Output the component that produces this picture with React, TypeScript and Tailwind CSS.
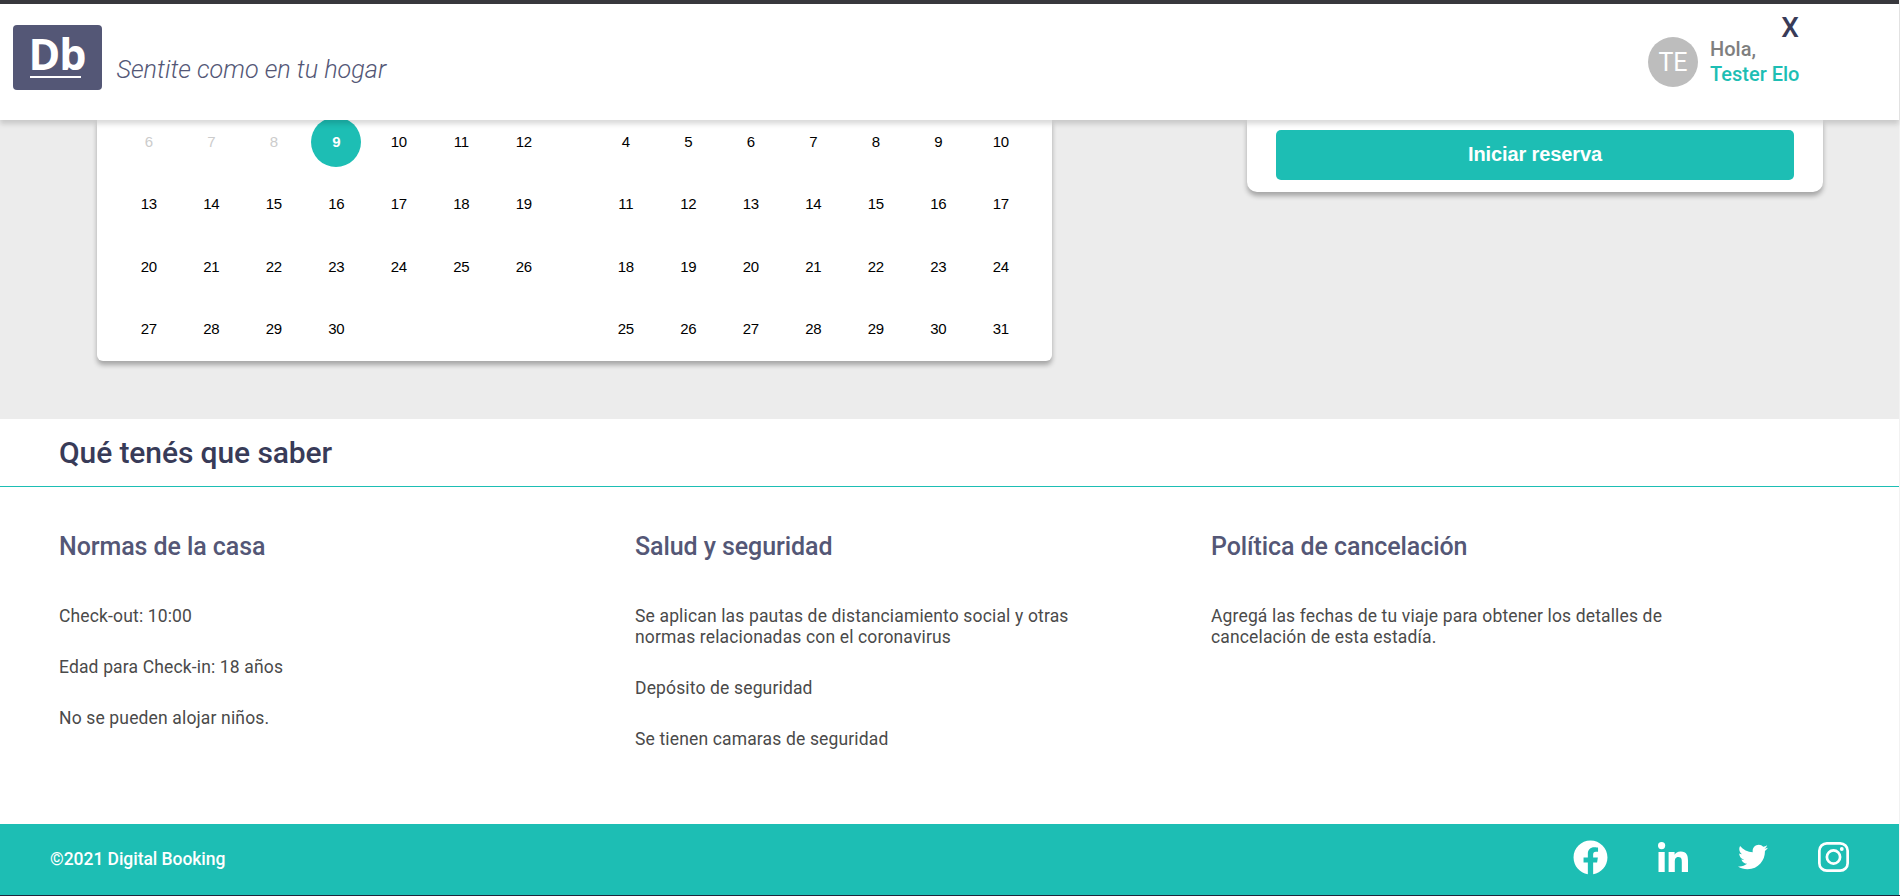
import { FaFacebook, FaTwitter } from "react-icons/fa";

const june: number[] = [
  6, 7, 8, 9, 10, 11, 12, 13, 14, 15, 16, 17, 18, 19, 20, 21, 22, 23, 24, 25, 26, 27, 28, 29, 30,
];
const july: number[] = [
  4, 5, 6, 7, 8, 9, 10, 11, 12, 13, 14, 15, 16, 17, 18, 19, 20, 21, 22, 23, 24, 25, 26, 27, 28, 29, 30, 31,
];

const policies = [
  { title: "Normas de la casa", items: ["Check-out: 10:00", "Edad para Check-in: 18 años", "No se pueden alojar niños."] },
  {
    title: "Salud y seguridad",
    items: [
      "Se aplican las pautas de distanciamiento social y otras normas relacionadas con el coronavirus",
      "Depósito de seguridad",
      "Se tienen camaras de seguridad",
    ],
  },
  {
    title: "Política de cancelación",
    items: ["Agregá las fechas de tu viaje para obtener los detalles de cancelación de esta estadía."],
  },
];

function Month({ days, today }: { days: number[]; today?: number }) {
  return (
    <div className="-mt-[3px] grid w-[437.5px] grid-cols-7 content-start gap-y-[12.5px]">
      {days.map((d) => {
        const past = today !== undefined && d < today;
        return (
          <div
            key={d}
            className={
              "mx-auto flex h-[50px] w-[50px] items-center justify-center rounded-full text-[15px] tracking-[-0.4px] " +
              (d === today ? "bg-[#1dbeb4] font-bold text-white" : past ? "text-[#cccccc]" : "text-black")
            }
          >
            {d}
          </div>
        );
      })}
    </div>
  );
}

function Header() {
  return (
    <header className="relative z-10 flex h-[120px] w-[1899px] shrink-0 border-t-4 border-[#38383d] bg-white shadow-[0_4px_5px_rgba(0,0,0,0.15)]">
      <div className="ml-[13px] mt-[21px] flex h-[65px] w-[88.5px] flex-col rounded-[4px] bg-[#545776] pl-[17px]">
        <span className="mt-[3px] h-[48px] font-['Open_Sans',sans-serif] text-[43px] font-bold leading-[52px] tracking-[-1.2px] text-white -indent-[1.5px]">Db</span>
        <span className="h-[2px] w-[51px] bg-white" />
      </div>
      <p className="ml-[15px] mt-[51px] text-[25.2px] font-light italic leading-[30px] text-[#545776]">Sentite como en tu hogar</p>
      <div className="ml-auto mr-[99px] flex">
        <div className="mt-[33px] flex h-[50px] w-[50px] items-center justify-center rounded-full bg-[#bdbdbd] pt-px text-[25px] text-white">TE</div>
        <div className="ml-[12px] w-[90px]">
          <div className="flex h-[33px] justify-end pr-px pt-[9px] text-[28px] font-medium leading-[30px] text-[#383b58]">X</div>
          <div className="text-[20px] font-medium leading-[25px] text-[#7f7f7f]">Hola,</div>
          <div className="whitespace-nowrap text-[20px] font-medium leading-[25px] text-[#1dbeb4]">Tester Elo</div>
        </div>
      </div>
    </header>
  );
}

export default function App() {
  return (
    <div className="flex h-[896px] w-full flex-col overflow-hidden bg-[#f2f2f2] font-['Roboto',sans-serif]">
      <Header />
      <section className="flex h-[299px] w-[1899px] shrink-0 items-start bg-[#ececec]">
        <div className="ml-[97px] flex h-[241px] w-[955px] gap-[39.5px] rounded-b-[6px] bg-white pl-[20.5px] font-['Liberation_Sans',sans-serif] shadow-[0_4px_5px_rgba(0,0,0,0.3)]">
          <Month days={june} today={9} />
          <Month days={july} />
        </div>
        <div className="ml-[195px] flex h-[72px] w-[576px] rounded-b-[10px] bg-white px-[29px] pt-[10px] shadow-[0_4px_5px_rgba(0,0,0,0.3)]">
          <button className="h-[50px] w-full rounded-[5px] bg-[#1dbeb4] pb-[2px] font-['Liberation_Sans',sans-serif] text-[20px] font-bold tracking-[-0.12px] text-white">Iniciar reserva</button>
        </div>
      </section>
      <section className="h-[405px] w-[1899px] shrink-0 bg-white">
        <h2 className="h-[68px] border-b border-[#1dbeb4] pl-[59px] text-[30px] font-medium leading-[67px] tracking-[-0.1px] text-[#383b58]">Qué tenés que saber</h2>
        <div className="grid grid-cols-[576px_576px_576px] pl-[59px] pt-[45px]">
          {policies.map((p) => (
            <div key={p.title}>
              <h3 className="text-[25px] font-medium leading-[29px] tracking-[-0.08px] text-[#545776]">{p.title}</h3>
              <ul className="mt-[45px] flex w-[480px] flex-col gap-[30px]">
                {p.items.map((t) => (
                  <li key={t} className="text-[17.5px] leading-[21px] tracking-[0.15px] text-[#4a4a4a]">{t}</li>
                ))}
              </ul>
            </div>
          ))}
        </div>
      </section>
      <footer className="flex h-[71px] w-[1899px] shrink-0 items-start bg-[#1dbeb4] text-white">
        <p className="ml-[50px] mt-[25px] text-[17.5px] font-medium leading-[21px] tracking-[-0.05px]">©2021 Digital Booking</p>
        <div className="ml-auto mr-[50px] flex items-start">
          <FaFacebook className="mt-[16px] h-[35px] w-[35px]" />
          <svg className="ml-[50px] mt-[18px] h-[30px] w-[30px]" viewBox="0 0 30 30" fill="currentColor">
            <circle cx="3.6" cy="3.6" r="3.6" />
            <path d="M.5 10h6.2v20H.5zM10.6 10h6v2.7c.9-1.7 3-3.3 6.1-3.3 6.1 0 7.3 4 7.3 9.3V30h-6.2v-9.8c0-2.4 0-5.3-3.3-5.3s-3.7 2.5-3.7 5.1v10h-6.2z" />
          </svg>
          <FaTwitter className="ml-[50px] mt-[18px] h-[30px] w-[30px]" />
          <svg className="ml-[50px] mt-[18px] h-[30px] w-[31px]" viewBox="0 0 31 30" fill="none" stroke="currentColor" strokeWidth="2.7">
            <rect x="1.35" y="1.35" width="28.3" height="27.3" rx="7.5" />
            <circle cx="15.5" cy="15" r="6.6" />
            <circle cx="23.8" cy="7" r="1.9" fill="currentColor" stroke="none" />
          </svg>
        </div>
      </footer>
      <div className="h-px w-full shrink-0 bg-[#20263c]" />
    </div>
  );
}
